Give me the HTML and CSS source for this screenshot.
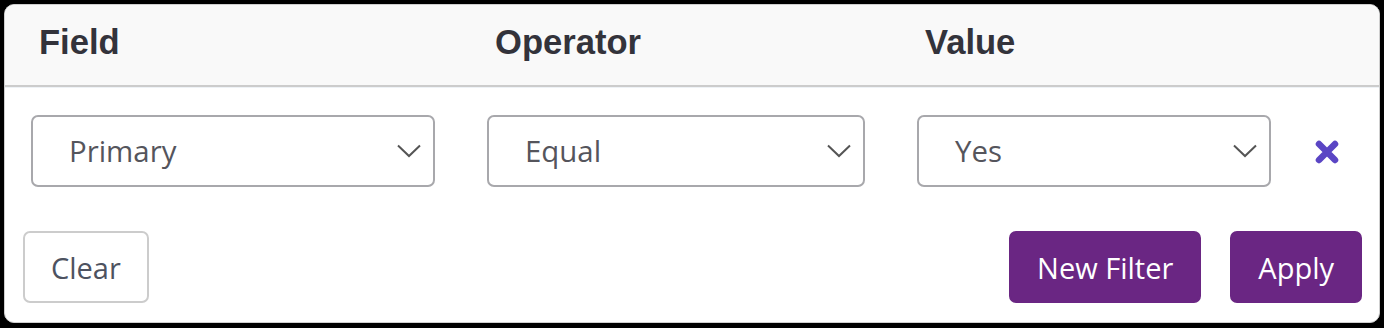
FILE: index.html
```html
<!DOCTYPE html>
<html lang="en">
<head>
    <meta charset="UTF-8">
    <title>Filters</title>
    <link rel="stylesheet" href="styles.css">
</head>
<body>
<div class="filter-panel">
    <div class="filter-head">
        <div class="col">Field</div>
        <div class="col">Operator</div>
        <div class="col">Value</div>
    </div>
    <div class="filter-body">
        <div class="filter-row">
            <div class="select">
                <span>Primary</span>
                <svg class="chevron" width="24" height="14" viewBox="0 0 24 14"><path d="M1 1.5 L12 12 L23 1.5" fill="none" stroke="#555" stroke-width="2"/></svg>
            </div>
            <div class="select">
                <span>Equal</span>
                <svg class="chevron" width="24" height="14" viewBox="0 0 24 14"><path d="M1 1.5 L12 12 L23 1.5" fill="none" stroke="#555" stroke-width="2"/></svg>
            </div>
            <div class="select">
                <span>Yes</span>
                <svg class="chevron" width="24" height="14" viewBox="0 0 24 14"><path d="M1 1.5 L12 12 L23 1.5" fill="none" stroke="#555" stroke-width="2"/></svg>
            </div>
            <a href="javascript:;" class="remove">
                <svg width="26" height="26" viewBox="0 0 26 26"><path d="M5 5 L21 21 M21 5 L5 21" stroke="#5a45c4" stroke-width="6.5" stroke-linecap="round"/></svg>
            </a>
        </div>
        <div class="actions">
            <button class="btn">Clear</button>
            <div class="actions-right">
                <button class="btn primary">New Filter</button>
                <button class="btn primary">Apply</button>
            </div>
        </div>
    </div>
</div>
</body>
</html>
```

FILE: styles.css
```css
html, body {
    margin: 0;
    height: 328px;
}

body {
    background-color: #000;
    padding: 4px 4px 5px 4px;
    box-sizing: border-box;
    font-family: "Open Sans", "Liberation Sans", sans-serif;
}

.filter-panel {
    height: 100%;
    background-color: #fff;
    border: 1px solid #cfcfcf;
    border-radius: 10px;
    overflow: hidden;
    box-sizing: border-box;
}

.filter-head {
    display: grid;
    grid-template-columns: 404px 378px 354px;
    column-gap: 52px;
    padding: 0 0 8px 26px;
    height: 82px;
    box-sizing: border-box;
    background-color: #f9f9f9;
    border-bottom: 2px solid #cccccc;
    box-shadow: 0 1px 0 #eef2f6;
}

.filter-head .col {
    padding-left: 8px;
    font-family: "Liberation Sans", Arial, sans-serif;
    font-weight: bold;
    font-size: 34.6px;
    line-height: 74px;
    color: #33333b;
}

.filter-body {
    padding: 28px 17px 0 18px;
}

.filter-row {
    display: grid;
    grid-template-columns: 404px 378px 354px 26px;
    column-gap: 52px;
    align-items: center;
    padding-left: 8px;
}

.select {
    display: flex;
    align-items: center;
    justify-content: space-between;
    height: 72px;
    padding: 0 12px 0 36px;
    border: 2px solid #a8a8ac;
    border-radius: 7px;
    box-sizing: border-box;
    font-size: 29.4px;
    color: #55555c;
}

.chevron {
    display: block;
}

.remove {
    display: block;
    margin-left: -9px;
    margin-top: 2px;
}

.remove svg {
    display: block;
}

.actions {
    display: flex;
    justify-content: space-between;
    margin-top: 44px;
}

.actions-right {
    display: flex;
    gap: 29px;
}

.btn {
    height: 72px;
    padding: 0 26px;
    border: 2px solid #cccccc;
    border-radius: 7px;
    background-color: #fff;
    font-family: "Open Sans", "Liberation Sans", sans-serif;
    font-size: 29px;
    color: #4d5260;
    cursor: pointer;
}

.btn.primary {
    background-color: #6a2683;
    border-color: #6a2683;
    color: #fff;
}
```
